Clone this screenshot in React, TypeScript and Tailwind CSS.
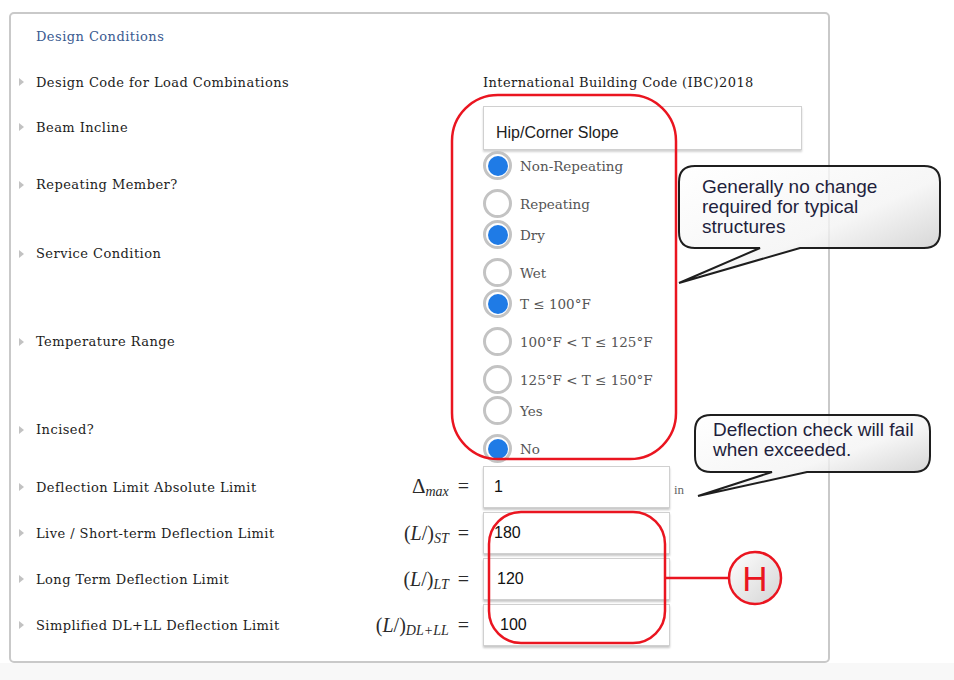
import React from 'react';

type Option = { label: string; checked?: boolean };

const CHOICES: { label: string; options: Option[] }[] = [
  { label: 'Repeating Member?', options: [{ label: 'Non-Repeating', checked: true }, { label: 'Repeating' }] },
  { label: 'Service Condition', options: [{ label: 'Dry', checked: true }, { label: 'Wet' }] },
  {
    label: 'Temperature Range',
    options: [
      { label: 'T ≤ 100°F', checked: true },
      { label: '100°F < T ≤ 125°F' },
      { label: '125°F < T ≤ 150°F' },
    ],
  },
  { label: 'Incised?', options: [{ label: 'Yes' }, { label: 'No', checked: true }] },
];

const LIMITS = [
  { label: 'Deflection Limit Absolute Limit', sub: 'max', delta: true, value: '1', pad: 'pl-[10px]', unit: 'in' },
  { label: 'Live / Short-term Deflection Limit', sub: 'ST', value: '180', pad: 'pl-[10px]' },
  { label: 'Long Term Deflection Limit', sub: 'LT', value: '120', pad: 'pl-[13px]' },
  { label: 'Simplified DL+LL Deflection Limit', sub: 'DL+LL', value: '100', pad: 'pl-[16px]' },
];

const Arrow = () => (
  <span className="w-[17px] flex items-center">
    <span className="w-0 h-0 border-y-[4px] border-y-transparent border-l-[5px] border-l-[#c2c2c2]" />
  </span>
);

const Label: React.FC<{ text: string; children?: React.ReactNode }> = ({ text, children }) => (
  <div className="w-[472px] shrink-0 flex items-center pl-[8px]">
    <Arrow />
    <span className="text-[#1c1c1c] tracking-[0.45px] pt-[1px]">{text}</span>
    {children}
  </div>
);

const Radio: React.FC<Option> = ({ label, checked }) => (
  <div className="h-[31px] flex items-center">
    <span className="w-[29px] h-[29px] rounded-full border-[3px] border-[#c3c3c3] bg-white flex items-center justify-center">
      {checked && <span className="w-[20px] h-[20px] rounded-full bg-[#1f7be6]" />}
    </span>
    <span className="ml-[8px] text-[#555] text-[13.5px] pt-[1px]">{label}</span>
  </div>
);

const MathTag: React.FC<{ sub: string; delta?: boolean }> = ({ sub, delta }) => (
  <span className="ml-auto pr-[14px] font-['Liberation_Serif',serif] text-[20px] text-[#2a2a2a] flex items-baseline">
    {delta ? (
      <span className="text-[21px]">Δ</span>
    ) : (
      <>
        <span>(</span>
        <span className="italic">L</span>
        <span>/</span>
        <span>)</span>
      </>
    )}
    <span className="italic text-[14px] relative top-[3px]">{sub}</span>
    <span className="ml-[9px]">=</span>
  </span>
);

export default function App() {
  return (
    <div className="relative w-[954px] h-[680px] bg-white flex flex-col overflow-hidden font-['DejaVu_Serif',serif] text-[13px]">
      <div className="ml-[9px] mt-[12px] w-[821px] h-[651px] shrink-0 border-2 border-[#c9c9c9] rounded-[5px] flex flex-col">
        <div className="h-[46px] pl-[25px] flex items-center text-[#3a5a90] tracking-[0.45px]">Design Conditions</div>

        <div className="h-[44px] flex items-center">
          <Label text="Design Code for Load Combinations" />
          <span className="text-[#1c1c1c] tracking-[0.4px] pt-[1px]">International Building Code (IBC)2018</span>
        </div>

        <div className="h-[46px] flex">
          <Label text="Beam Incline" />
          <div className="pt-[2px]">
            <div className="w-[319px] h-[44px] border border-[#d0d0d0] shadow-[0_2px_2px_rgba(0,0,0,0.18)] flex items-center pl-[12px] pt-[9px] font-['Liberation_Sans',sans-serif] text-[16px] text-[#222]">
              Hip/Corner Slope
            </div>
          </div>
        </div>

        {CHOICES.map((row) => (
          <div key={row.label} className="flex">
            <Label text={row.label} />
            <div className="flex flex-col gap-[7px]">
              {row.options.map((o) => (
                <Radio key={o.label} {...o} />
              ))}
            </div>
          </div>
        ))}

        {LIMITS.map((row) => (
          <div key={row.label} className="h-[46px] flex">
            <Label text={row.label}>
              <MathTag sub={row.sub} delta={row.delta} />
            </Label>
            <div className="pt-[2px] flex">
              <div
                className={`w-[187px] h-[42px] border border-[#d0d0d0] shadow-[0_2px_2px_rgba(0,0,0,0.22)] flex items-center ${row.pad} font-['Liberation_Sans',sans-serif] text-[16px] text-[#111]`}
              >
                {row.value}
              </div>
              {row.unit && <span className="ml-[4px] pt-[14px] text-[13px] text-[#666] font-['Liberation_Serif',serif]">{row.unit}</span>}
            </div>
          </div>
        ))}
      </div>
      <div className="flex-1 bg-[#f8f8f8]" />

      {/* annotation layer */}
      <svg className="absolute inset-0 pointer-events-none" width="954" height="680">
        <defs>
          <linearGradient id="balloon" x1="0" y1="0" x2="1" y2="1">
            <stop offset="0" stopColor="#ffffff" />
            <stop offset="0.55" stopColor="#f4f4f4" />
            <stop offset="1" stopColor="#b9b9b9" />
          </linearGradient>
          <linearGradient id="bubble" x1="0" y1="0" x2="1" y2="1">
            <stop offset="0" stopColor="#ffffff" />
            <stop offset="1" stopColor="#d4d4d4" />
          </linearGradient>
        </defs>
        <rect x="452" y="95" width="224" height="364" rx="46" fill="none" stroke="#ea1520" strokeWidth="2.5" />
        <rect x="489" y="512" width="176" height="131" rx="32" fill="none" stroke="#ea1520" strokeWidth="2.5" />
        <line x1="665" y1="578" x2="729" y2="578" stroke="#ea1520" strokeWidth="2.5" />
        <circle cx="755" cy="578" r="26" fill="url(#bubble)" stroke="#ea1520" strokeWidth="2.5" />
        <text x="755" y="591" textAnchor="middle" fill="#ea1520" fontFamily="Liberation Sans, Arial, sans-serif" fontSize="35">
          H
        </text>
        <path
          d="M695 166 H924 Q940 166 940 182 V232 Q940 248 924 248 H800 L679 283 L760 248 H695 Q679 248 679 232 V182 Q679 166 695 166 Z"
          fill="url(#balloon)"
          fillOpacity="0.8"
          stroke="#1e1e1e"
          strokeWidth="2"
        />
        <path
          d="M711 415 H914 Q930 415 930 431 V456 Q930 472 914 472 H807 L698 496 L772 472 H711 Q695 472 695 456 V431 Q695 415 711 415 Z"
          fill="url(#balloon)"
          fillOpacity="0.8"
          stroke="#1e1e1e"
          strokeWidth="2"
        />
      </svg>

      <div className="absolute left-[702px] top-[177px] font-['Liberation_Sans',sans-serif] text-[19px] leading-[20px] text-[#1f1f3d]">
        Generally no change
        <br />
        required for typical
        <br />
        structures
      </div>
      <div className="absolute left-[713px] top-[420px] font-['Liberation_Sans',sans-serif] text-[19px] leading-[20px] text-[#1f1f3d]">
        Deflection check will fail
        <br />
        when exceeded.
      </div>
    </div>
  );
}
